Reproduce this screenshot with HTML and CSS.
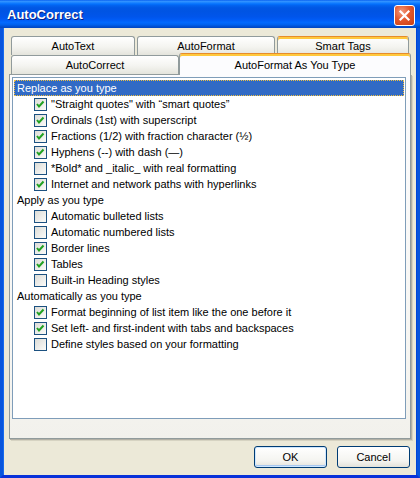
FILE: index.html
```html
<!DOCTYPE html>
<html lang="en">

<head>
    <meta charset="UTF-8">
    <title>AutoCorrect</title>
    <link rel="stylesheet" href="styles.css">
</head>

<body>
    <div class="vindue">
        <div class="titel">
            <span class="titeltekst">AutoCorrect</span>
            <div class="luk">
                <svg width="13" height="13" viewBox="0 0 13 13">
                    <path d="M2.5 2.5 L10.5 10.5 M10.5 2.5 L2.5 10.5" stroke="#fff" stroke-width="2.2" stroke-linecap="square" />
                </svg>
            </div>
        </div>

        <div class="krop">
            <div class="faner">
                <div class="fanerad">
                    <div class="fane" style="width:124px">AutoText</div>
                    <div class="fane" style="width:138px">AutoFormat</div>
                    <div class="fane hot" style="width:132px">Smart Tags</div>
                </div>
                <div class="fanerad">
                    <div class="fane" style="width:168px">AutoCorrect</div>
                    <div class="fane valgt" style="width:232px">AutoFormat As You Type</div>
                </div>
            </div>

            <div class="panel">
                <div class="liste">
                    <div class="gruppe markeret">Replace as you type</div>
                    <div class="punkt"><span class="boks tjek"></span>"Straight quotes" with “smart quotes”</div>
                    <div class="punkt"><span class="boks tjek"></span>Ordinals (1st) with superscript</div>
                    <div class="punkt"><span class="boks tjek"></span>Fractions (1/2) with fraction character (½)</div>
                    <div class="punkt"><span class="boks tjek"></span>Hyphens (--) with dash (—)</div>
                    <div class="punkt"><span class="boks"></span>*Bold* and _italic_ with real formatting</div>
                    <div class="punkt"><span class="boks tjek"></span>Internet and network paths with hyperlinks</div>
                    <div class="gruppe">Apply as you type</div>
                    <div class="punkt"><span class="boks"></span>Automatic bulleted lists</div>
                    <div class="punkt"><span class="boks"></span>Automatic numbered lists</div>
                    <div class="punkt"><span class="boks tjek"></span>Border lines</div>
                    <div class="punkt"><span class="boks tjek"></span>Tables</div>
                    <div class="punkt"><span class="boks"></span>Built-in Heading styles</div>
                    <div class="gruppe">Automatically as you type</div>
                    <div class="punkt"><span class="boks tjek"></span>Format beginning of list item like the one before it</div>
                    <div class="punkt"><span class="boks tjek"></span>Set left- and first-indent with tabs and backspaces</div>
                    <div class="punkt"><span class="boks"></span>Define styles based on your formatting</div>
                </div>
            </div>

            <div class="knapper">
                <button class="knap standard">OK</button>
                <button class="knap">Cancel</button>
            </div>
        </div>
    </div>
</body>

</html>
```

FILE: styles.css
```css
body {
    margin: 0;
    font-family: "Liberation Sans", Arial, sans-serif;
    font-size: 11px;
    color: #000;
}

.vindue {
    width: 420px;
    height: 478px;
    display: flex;
    flex-direction: column;
}

.titel {
    height: 28px;
    flex-shrink: 0;
    display: flex;
    align-items: center;
    justify-content: space-between;
    padding: 0 5px 0 7px;
    background: linear-gradient(to bottom, #0058ee 0%, #3593ff 4%, #288eff 7%, #127dff 11%, #036ffc 15%, #0262ee 20%, #0057e5 28%, #0054e3 40%, #0055eb 60%, #005bf5 70%, #026afe 80%, #0062ef 88%, #0052d6 94%, #0046c0 100%);
}

.titeltekst {
    color: #fff;
    font-weight: bold;
    font-size: 13px;
    text-shadow: 1px 1px #0a1e80;
    margin-top: 1px;
}

.luk {
    width: 21px;
    height: 21px;
    box-sizing: border-box;
    border: 1px solid #fff;
    border-radius: 3px;
    background: radial-gradient(circle at 35% 30%, #f39a7d 0%, #e2582e 45%, #c73f14 100%);
    display: flex;
    align-items: center;
    justify-content: center;
    margin-top: 3px;
}

.krop {
    flex: 1;
    background: #ece9d8;
    border-left: 3px solid #0855dd;
    border-right: 3px solid #0855dd;
    border-bottom: 3px solid #0831d9;
    box-shadow: inset 1px 0 #166aee, inset -1px 0 #0046d8;
    padding: 8px 5px 0 6px;
    display: flex;
    flex-direction: column;
}

.faner {
    padding-left: 2px;
}

.fanerad {
    display: flex;
    gap: 2px;
}

.fanerad + .fanerad {
    gap: 0;
}

.fane {
    height: 19px;
    box-sizing: border-box;
    border: 1px solid #919b9c;
    border-bottom: none;
    border-radius: 3px 3px 0 0;
    background: linear-gradient(#ffffff, #f4f4f0 55%, #e4e4dc);
    text-align: center;
    line-height: 18px;
}

.hot {
    border-top: 1px solid #e68b2c;
    box-shadow: inset 0 2px #ffc83c;
    line-height: 19px;
}

.valgt {
    height: 22px;
    margin-top: -2px;
    margin-bottom: -1px;
    position: relative;
    z-index: 2;
    background: #fcfcfe;
    border-top: 1px solid #e68b2c;
    box-shadow: inset 0 2px #ffc83c;
    line-height: 22px;
}

.panel {
    height: 365px;
    box-sizing: border-box;
    border: 1px solid #919b9c;
    background: linear-gradient(#fcfcfe, #f6f5f1 80%, #f2f1ec);
    box-shadow: 1px 1px #b2b0a5, 2px 2px #d6d3c2;
    padding: 2px 0 0 2px;
    margin-right: 1px;
    position: relative;
    z-index: 1;
}

.liste {
    width: 394px;
    height: 342px;
    box-sizing: border-box;
    border: 1px solid #7f9db9;
    background: #fff;
    padding: 2px 1px;
}

.gruppe,
.punkt {
    height: 16px;
    display: flex;
    align-items: center;
    white-space: nowrap;
}

.gruppe {
    padding-left: 3px;
}

.markeret {
    background: #316ac5;
    color: #fff;
    outline: 1px dotted #f0c040;
    outline-offset: -1px;
}

.punkt {
    padding-left: 20px;
}

.boks {
    width: 13px;
    height: 13px;
    box-sizing: border-box;
    border: 1px solid #1c5180;
    background: linear-gradient(135deg, #dcdcd7, #fbfbf9);
    margin-right: 4px;
    flex-shrink: 0;
}

.tjek {
    background-image: url("data:image/svg+xml;utf8,<svg xmlns='http://www.w3.org/2000/svg' width='11' height='11'><polyline points='2,5 4,7.5 8.5,2.5' fill='none' stroke='%2321a121' stroke-width='2'/></svg>"), linear-gradient(135deg, #dcdcd7, #fbfbf9);
}

.knapper {
    display: flex;
    justify-content: flex-end;
    gap: 10px;
    padding: 7px 2px 0 0;
}

.knap {
    width: 73px;
    height: 22px;
    font-family: "Liberation Sans", Arial, sans-serif;
    font-size: 11px;
    border: 1px solid #003c74;
    border-radius: 3px;
    background: linear-gradient(#ffffff, #f4f4f0 70%, #e3e2da);
    padding: 0;
    color: #000;
}

.standard {
    box-shadow: inset 0 0 0 1px #cee7ff, inset 0 -1px 0 1px #a8c8f0;
}
```
